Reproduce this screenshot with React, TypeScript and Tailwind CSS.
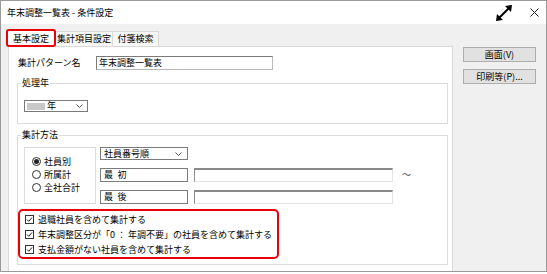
import React from 'react'

const Chevron = () => (
  <svg width="7" height="4" viewBox="0 0 7 4" className="shrink-0">
    <path d="M0.5 0.5 L3.5 3.5 L6.5 0.5" fill="none" stroke="#555" strokeWidth="1" />
  </svg>
)

const Radio = ({ checked, label }: { checked?: boolean; label: string }) => (
  <div className="flex h-[13px] items-center">
    <span className="flex h-[9px] w-[9px] items-center justify-center rounded-full border border-[#333] bg-white">
      {checked && <span className="h-[5px] w-[5px] rounded-full bg-[#222]" />}
    </span>
    <span className="ml-[3px]">{label}</span>
  </div>
)

const Check = ({ label }: { label: string }) => (
  <div className="flex h-[15px] items-center">
    <span className="flex h-[9px] w-[9px] items-center justify-center border border-[#333] bg-white">
      <svg width="7" height="7" viewBox="0 0 7 7">
        <path d="M1 3.5 L2.8 5.3 L6 1.5" fill="none" stroke="#222" strokeWidth="1" />
      </svg>
    </span>
    <span className="ml-[4px]">{label}</span>
  </div>
)

const GroupBox = ({
  title,
  className,
  children,
}: {
  title: string
  className: string
  children: React.ReactNode
}) => (
  <div className={'relative border border-[#dcdcdc] ' + className}>
    <span className="absolute -top-[7px] left-[3px] bg-white px-[1px] leading-[12px]">{title}</span>
    {children}
  </div>
)

export default function App() {
  return (
    <div className="h-[274px] w-[547px] bg-white font-['Noto_Sans_CJK_JP',sans-serif] text-[9px] leading-[12px] text-black">
      <div className="flex h-[272px] flex-col overflow-hidden border border-[#9a9a9a] bg-[#f0f0f0]">
        {/* title bar */}
        <div className="flex h-[23px] shrink-0 items-center bg-white pl-[6px]">
          <span>年末調整一覧表 - 条件設定</span>
          <div className="ml-auto flex items-center">
            <svg width="16" height="16" viewBox="0 0 16 16">
              <path d="M3.5 12.5 L12.5 3.5" stroke="#000" strokeWidth="2" />
              <polygon points="16,0 9,1 15,7" fill="#000" />
              <polygon points="0,16 7,15 1,9" fill="#000" />
            </svg>
            <svg width="9" height="9" viewBox="0 0 9 9" className="ml-[18px] mr-[7px]">
              <path d="M0.5 0.5 L8.5 8.5 M8.5 0.5 L0.5 8.5" stroke="#222" strokeWidth="1" />
            </svg>
          </div>
        </div>

        <div className="flex flex-1 pl-[7px]">
          <div className="flex w-[445px] flex-col pt-[5px]">
            {/* tabs */}
            <div className="flex h-[17px] items-end">
              <div className="relative z-10 -mb-[1px] -ml-[2px] flex h-[18px] w-[50px] items-center justify-center border border-b-0 border-[#d9d9d9] bg-white">
                基本設定
                <span className="absolute -left-[1px] -right-[1px] -top-[1px] bottom-0 rounded-[3px] border-2 border-[#e8000b]" />
              </div>
              <div className="flex h-[15px] w-[57px] items-center justify-center border border-b-0 border-l-0 border-[#d9d9d9] bg-[#f7f7f7]">
                集計項目設定
              </div>
              <div className="flex h-[15px] w-[46px] items-center justify-center border border-b-0 border-l-0 border-[#d9d9d9] bg-[#f7f7f7]">
                付箋検索
              </div>
            </div>

            {/* panel */}
            <div className="flex-1 border border-b-0 border-[#d9d9d9] bg-white pl-[8px] pr-[4px] pt-[9px]">
              <div className="flex h-[14px] items-center">
                <span className="ml-[1px] w-[78px]">集計パターン名</span>
                <div className="flex h-[14px] w-[177px] items-center border border-[#7a7a7a] border-b-[#b9b9b9] border-r-[#b9b9b9] pl-[2px]">
                  年末調整一覧表
                </div>
              </div>

              <GroupBox title="処理年" className="mt-[13px] h-[41px] pl-[6px] pt-[16px]">
                <div className="flex h-[12px] w-[64px] items-center border border-[#7a7a7a] pl-[2px] pr-[4px]">
                  <span className="h-[7px] w-[18px] bg-[#c8c8c8]" />
                  <span className="ml-[2px]">年</span>
                  <span className="ml-auto">
                    <Chevron />
                  </span>
                </div>
              </GroupBox>

              <GroupBox title="集計方法" className="mt-[11px] h-[130px] pt-[11px]">
                <div className="ml-[6px] flex">
                  <div className="h-[57px] w-[72px] border border-[#dcdcdc] pl-[7px] pt-[7px]">
                    <Radio checked label="社員別" />
                    <Radio label="所属計" />
                    <Radio label="全社合計" />
                  </div>
                  <div className="ml-[4px] flex flex-col">
                    <div className="flex h-[13px] w-[88px] items-center border border-[#7a7a7a] pl-[3px] pr-[5px]">
                      社員番号順
                      <span className="ml-auto">
                        <Chevron />
                      </span>
                    </div>
                    {['最\u2002初', '最\u2002後'].map((t, i) => (
                      <div key={i} className="mt-[8px] flex h-[14px] items-center">
                        <div className="flex h-[14px] w-[88px] items-center border border-[#7a7a7a] pl-[3px]">
                          {t}
                        </div>
                        <div className="ml-[6px] h-[14px] w-[199px] border border-t-2 border-[#8a8a8a] border-b-[#e3e3e3] border-r-[#e3e3e3]" />
                        {i === 0 && <span className="ml-[9px] text-[#444]">〜</span>}
                      </div>
                    ))}
                  </div>
                </div>
                <div className="mt-[5px] h-[50px] w-[261px] rounded-[5px] border-2 border-[#e8000b] pl-[5px] pt-[1px]">
                  <Check label="退職社員を含めて集計する" />
                  <Check label="年末調整区分が「0 ： 年調不要」の社員を含めて集計する" />
                  <Check label="支払金額がない社員を含めて集計する" />
                </div>
              </GroupBox>
            </div>
          </div>

          {/* buttons */}
          <div className="ml-[10px] mt-[23px] flex w-[73px] flex-col gap-[7px]">
            <button className="flex h-[15px] items-center justify-center border border-[#adadad] bg-[#e1e1e1]">
              画面(V)
            </button>
            <button className="flex h-[15px] items-center justify-center border border-[#adadad] bg-[#e1e1e1]">
              印刷等(P)...
            </button>
          </div>
        </div>
      </div>
    </div>
  )
}
